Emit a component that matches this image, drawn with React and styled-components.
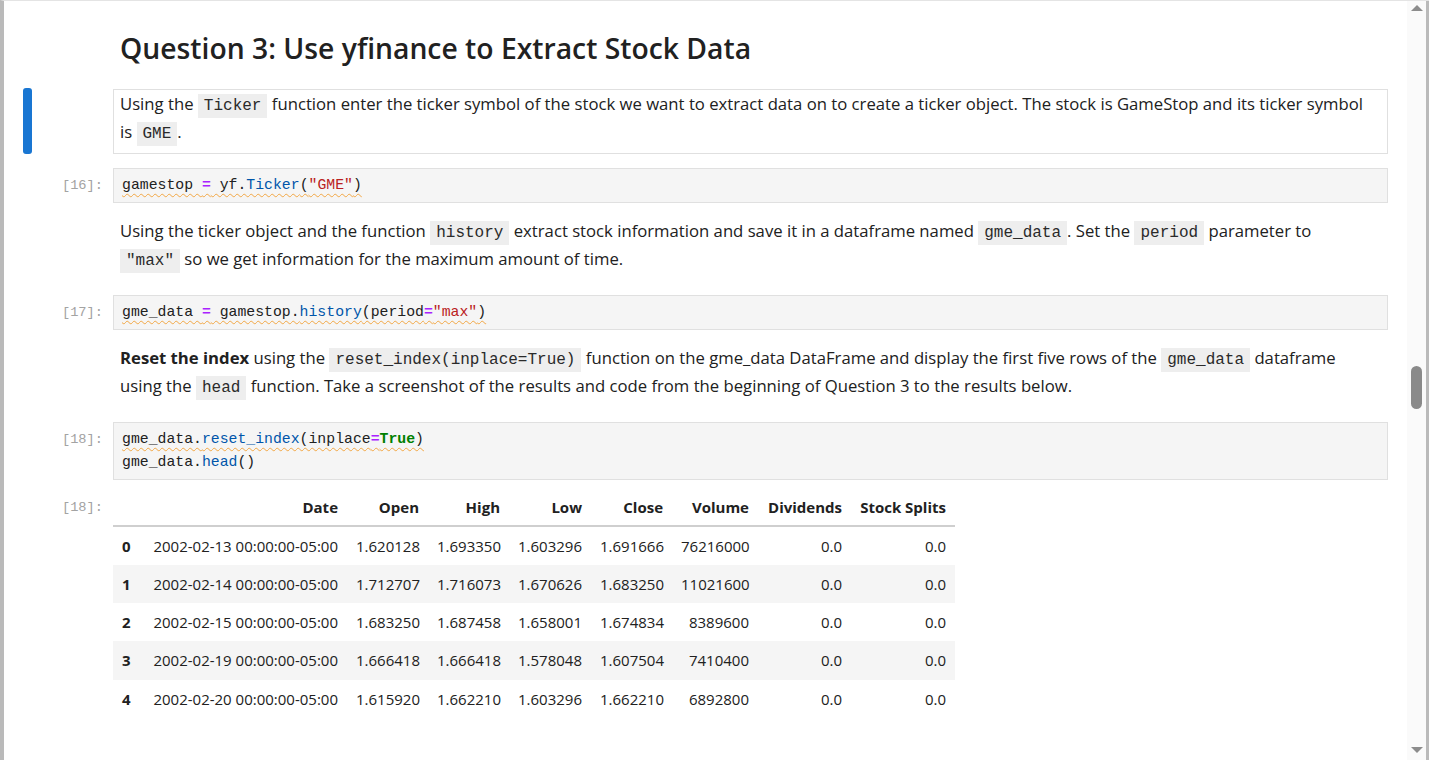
import React from "react";
import styled, { createGlobalStyle } from "styled-components";

const GlobalStyle = createGlobalStyle`
  html, body { margin: 0; padding: 0; background: #ffffff; overflow: hidden; }
  * { box-sizing: border-box; }
`;

const SANS = `"Segoe UI", "Open Sans", "Noto Sans", sans-serif`;
const MONO = `"Liberation Mono", "DejaVu Sans Mono", monospace`;

const Window = styled.div`
  display: flex;
  width: 1429px;
  height: 760px;
  border-left: 4px solid #bababa;
  border-top: 1px solid #e4e4e4;
  background: #ffffff;
  overflow: hidden;
`;

const Notebook = styled.main`
  flex: 1;
  display: flex;
  flex-direction: column;
  gap: 14px;
  padding: 29px 19px 0 0;
  font-family: ${SANS};
  color: #212121;
`;

const Cell = styled.section`
  display: grid;
  grid-template-columns: 109px 1fr;
  margin-top: ${(p) => p.$pullUp || 0}px;
`;

const Gutter = styled.div`
  display: flex;
  justify-content: space-between;
  align-items: stretch;
`;

const ActiveBar = styled.div`
  width: 9px;
  margin: -1px 0 0 19px;
  border-radius: 3px;
  background: #1976d2;
`;

const Prompt = styled.div`
  margin-left: auto;
  padding: 6px 10px 0 0;
  font-family: ${MONO};
  font-size: 13.7px;
  line-height: 23px;
  color: #a3a3a3;
  text-align: right;
`;

const Heading = styled.h2`
  margin: 0;
  padding: 0 7px 8px;
  font-size: 28.3px;
  line-height: 37px;
  font-weight: 600;
  color: #212121;
`;

const Markdown = styled.div`
  padding: 0 ${(p) => (p.$selected ? "6px 7px" : "7px 8px")};
  border: ${(p) => (p.$selected ? "1px solid #e0e0e0" : "none")};
  font-size: 16.7px;
  line-height: 28px;
  color: #212121;
`;

const InlineCode = styled.code`
  font-family: ${MONO};
  font-size: 16px;
  line-height: 16px;
  padding: 3px 6px;
  background: #eeeeee;
  color: #2a2a2a;
`;

const CodeBox = styled.pre`
  margin: 0;
  padding: 5px 8px;
  border: 1px solid #e0e0e0;
  background: #f5f5f5;
  font-family: ${MONO};
  font-size: 14.8px;
  line-height: 23px;
  color: #212121;
`;

const Line = styled.div`
  & > span.u {
    text-decoration: underline wavy #f2a744;
    text-decoration-thickness: 1px;
    text-underline-offset: 4px;
  }
`;

const Tok = styled.span`
  color: ${(p) =>
    p.$k === "op" ? "#aa22ff" : p.$k === "str" ? "#ba2121" : p.$k === "kw" ? "#008000" : p.$k === "fn" ? "#0055aa" : "#212121"};
  font-weight: ${(p) => (p.$k === "op" || p.$k === "kw" ? 700 : 400)};
`;

const Table = styled.table`
  border-collapse: collapse;
  table-layout: fixed;
  width: 842px;
  font-family: ${SANS};
  font-size: 15px;
  color: #212121;
`;

const Th = styled.th`
  padding: 7px 9px 7px;
  line-height: 20.5px;
  font-weight: 700;
  text-align: right;
  white-space: nowrap;
  border-bottom: 2px solid #cfcfcf;
`;

const Tr = styled.tr`
  background: ${(p) => (p.$striped ? "#f5f5f5" : "transparent")};
`;

const IndexCell = styled.th`
  padding: 9px 9px;
  line-height: 20.25px;
  font-weight: 700;
  text-align: left;
`;

const Td = styled.td`
  padding: 9px 9px;
  line-height: 20.25px;
  text-align: right;
  white-space: nowrap;
`;

const ScrollTrack = styled.aside`
  width: 22px;
  display: flex;
  flex-direction: column;
  align-items: center;
  justify-content: space-between;
  background: #fafafa;
  border-right: 3px solid #bababa;
  padding: 4px 0 7px;
  position: relative;
`;

const Arrow = styled.div`
  width: 0;
  height: 0;
  border-left: 6px solid transparent;
  border-right: 6px solid transparent;
  ${(p) => (p.$down ? "border-top: 6px solid #8c8c8c;" : "border-bottom: 6px solid #8c8c8c;")}
`;

const Thumb = styled.div`
  position: absolute;
  top: 365px;
  left: 4px;
  width: 11px;
  height: 43px;
  border-radius: 6px;
  background: #8a8a8a;
`;

const columns = ["", "Date", "Open", "High", "Low", "Close", "Volume", "Dividends", "Stock Splits"];
const widths = [25, 209, 81, 81, 82, 81, 86, 93, 104];
const rows = [
  ["0", "2002-02-13 00:00:00-05:00", "1.620128", "1.693350", "1.603296", "1.691666", "76216000", "0.0", "0.0"],
  ["1", "2002-02-14 00:00:00-05:00", "1.712707", "1.716073", "1.670626", "1.683250", "11021600", "0.0", "0.0"],
  ["2", "2002-02-15 00:00:00-05:00", "1.683250", "1.687458", "1.658001", "1.674834", "8389600", "0.0", "0.0"],
  ["3", "2002-02-19 00:00:00-05:00", "1.666418", "1.666418", "1.578048", "1.607504", "7410400", "0.0", "0.0"],
  ["4", "2002-02-20 00:00:00-05:00", "1.615920", "1.662210", "1.603296", "1.662210", "6892800", "0.0", "0.0"],
];

export default function App() {
  return (
    <>
      <GlobalStyle />
      <Window>
        <Notebook>
          <Cell>
            <Gutter />
            <Heading>Question 3: Use yfinance to Extract Stock Data</Heading>
          </Cell>

          <Cell>
            <Gutter>
              <ActiveBar />
            </Gutter>
            <Markdown $selected>
              Using the <InlineCode>Ticker</InlineCode> function enter the ticker symbol of the stock we want to extract
              data on to create a ticker object. The stock is GameStop and its ticker symbol
              <br />
              is <InlineCode>GME</InlineCode>.
            </Markdown>
          </Cell>

          <Cell>
            <Gutter>
              <Prompt>[16]:</Prompt>
            </Gutter>
            <CodeBox>
              <Line>
                <span className="u">
                  <Tok>gamestop </Tok>
                  <Tok $k="op">=</Tok>
                  <Tok> yf.</Tok>
                  <Tok $k="fn">Ticker</Tok>
                  <Tok>(</Tok>
                  <Tok $k="str">"GME"</Tok>
                  <Tok>)</Tok>
                </span>
              </Line>
            </CodeBox>
          </Cell>

          <Cell>
            <Gutter />
            <Markdown>
              Using the ticker object and the function <InlineCode>history</InlineCode> extract stock information and
              save it in a dataframe named <InlineCode>gme_data</InlineCode>. Set the <InlineCode>period</InlineCode>{" "}
              parameter to
              <br />
              <InlineCode>"max"</InlineCode> so we get information for the maximum amount of time.
            </Markdown>
          </Cell>

          <Cell>
            <Gutter>
              <Prompt>[17]:</Prompt>
            </Gutter>
            <CodeBox>
              <Line>
                <span className="u">
                  <Tok>gme_data </Tok>
                  <Tok $k="op">=</Tok>
                  <Tok> gamestop.</Tok>
                  <Tok $k="fn">history</Tok>
                  <Tok>(period</Tok>
                  <Tok $k="op">=</Tok>
                  <Tok $k="str">"max"</Tok>
                  <Tok>)</Tok>
                </span>
              </Line>
            </CodeBox>
          </Cell>

          <Cell>
            <Gutter />
            <Markdown>
              <strong>Reset the index</strong> using the <InlineCode>reset_index(inplace=True)</InlineCode> function on
              the gme_data DataFrame and display the first five rows of the <InlineCode>gme_data</InlineCode> dataframe
              <br />
              using the <InlineCode>head</InlineCode> function. Take a screenshot of the results and code from the
              beginning of Question 3 to the results below.
            </Markdown>
          </Cell>

          <Cell>
            <Gutter>
              <Prompt>[18]:</Prompt>
            </Gutter>
            <CodeBox>
              <Line>
                <span className="u">
                  <Tok>gme_data.</Tok>
                  <Tok $k="fn">reset_index</Tok>
                  <Tok>(inplace</Tok>
                  <Tok $k="op">=</Tok>
                  <Tok $k="kw">True</Tok>
                  <Tok>)</Tok>
                </span>
              </Line>
              <Line>
                <Tok>gme_data.</Tok>
                <Tok $k="fn">head</Tok>
                <Tok>()</Tok>
              </Line>
            </CodeBox>
          </Cell>

          <Cell $pullUp={-4}>
            <Gutter>
              <Prompt>[18]:</Prompt>
            </Gutter>
            <div>
              <Table>
                <colgroup>
                  {widths.map((w, i) => (
                    <col key={i} style={{ width: w }} />
                  ))}
                </colgroup>
                <thead>
                  <tr>
                    {columns.map((c, i) => (
                      <Th key={i}>{c}</Th>
                    ))}
                  </tr>
                </thead>
                <tbody>
                  {rows.map((r, i) => (
                    <Tr key={i} $striped={i % 2 === 1}>
                      <IndexCell>{r[0]}</IndexCell>
                      {r.slice(1).map((v, j) => (
                        <Td key={j}>{v}</Td>
                      ))}
                    </Tr>
                  ))}
                </tbody>
              </Table>
            </div>
          </Cell>
        </Notebook>
        <ScrollTrack>
          <Arrow />
          <Thumb />
          <Arrow $down />
        </ScrollTrack>
      </Window>
    </>
  );
}
